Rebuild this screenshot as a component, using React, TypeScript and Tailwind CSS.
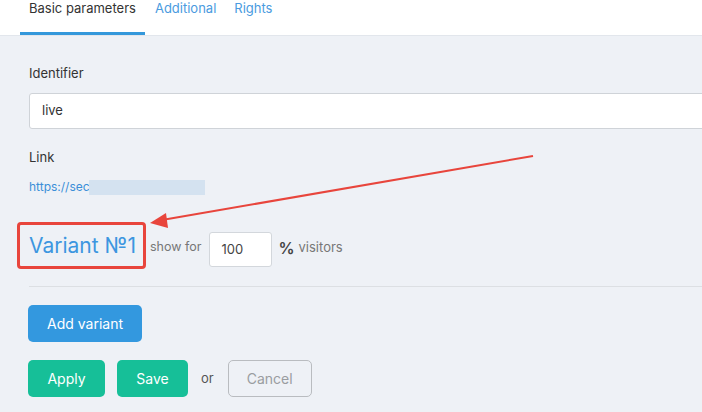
import React from 'react'

const tabs = [
  { label: 'Basic parameters', active: true },
  { label: 'Additional', active: false },
  { label: 'Rights', active: false },
]

export default function App() {
  return (
    <div className="relative w-[702px] h-[412px] overflow-hidden bg-[#eef1f6] font-['Inter',sans-serif] text-[13px] text-[#333]">
      {/* Tabs */}
      <div className="flex h-[36px] gap-[10px] border-b border-[#e2e6ec] bg-white pl-[20px]">
        {tabs.map((tab) => (
          <div
            key={tab.label}
            className={
              tab.active
                ? 'h-[35px] border-b-[3px] border-[#3498db] px-[9px] leading-[16px] text-[#333]'
                : 'h-[35px] px-[0px] leading-[16px] text-[#4a9be0] pr-[8px]'
            }
          >
            {tab.label}
          </div>
        ))}
      </div>

      {/* Form */}
      <div className="pl-[29px] pt-[29px]">
        <div className="leading-[16px]">Identifier</div>
        <div className="mt-[12px] flex h-[36px] w-[700px] items-center rounded-[3px] border border-[#cfd3d8] bg-white pl-[12px]">
          live
        </div>

        <div className="mt-[20px] leading-[16px]">Link</div>
        <div className="mt-[14px] flex items-center text-[12px] leading-[16px] text-[#3b8fd8]">
          <span>https://sec</span>
          <span className="ml-[-1px] h-[15px] w-[116px] bg-[#d4e2f0]" />
        </div>

        <div className="mt-[27px] flex items-center">
          <div className="ml-[-12px] flex h-[47px] items-center rounded-[4px] border-[3px] border-[#e8453c] pl-[9px] pr-[7px]">
            <span className="text-[21px] leading-[26px] text-[#3c96e0]">Variant №1</span>
          </div>
          <span className="ml-[4px] mt-[4px] text-[12.5px] text-[#777]">show for</span>
          <div className="ml-[8px] mt-[8px] flex h-[35px] w-[63px] items-center rounded-[3px] border border-[#d3d7dc] bg-white pl-[11px] text-[#444]">
            100
          </div>
          <span className="ml-[6px] mt-[4px] text-[16px] font-semibold text-[#444]">%</span>
          <span className="ml-[4px] mt-[4px] text-[#777]">visitors</span>
        </div>

        <div className="mt-[17px] h-px w-full bg-[#dcdfe3]" />

        <button className="ml-[-1px] mt-[18px] h-[37px] w-[114px] rounded-[5px] bg-[#3398df] text-[14px] text-white">
          Add variant
        </button>

        <div className="ml-[-1px] mt-[18px] flex items-center">
          <button className="h-[37px] w-[77px] rounded-[5px] bg-[#16bf98] text-[14px] text-white">Apply</button>
          <button className="ml-[12px] h-[37px] w-[71px] rounded-[5px] bg-[#16bf98] text-[14px] text-white">Save</button>
          <span className="ml-[13px] text-[#555]">or</span>
          <button className="ml-[14px] h-[37px] w-[84px] rounded-[5px] border border-[#b9bcc0] text-[14px] text-[#9a9da1]">
            Cancel
          </button>
        </div>
      </div>

      {/* Annotation arrow */}
      <svg className="pointer-events-none absolute left-0 top-0" width="702" height="412">
        <line x1="533" y1="156" x2="162" y2="220" stroke="#e8453c" strokeWidth="2" />
        <polygon points="150,223 166,213 168,228" fill="#e8453c" />
      </svg>
    </div>
  )
}
